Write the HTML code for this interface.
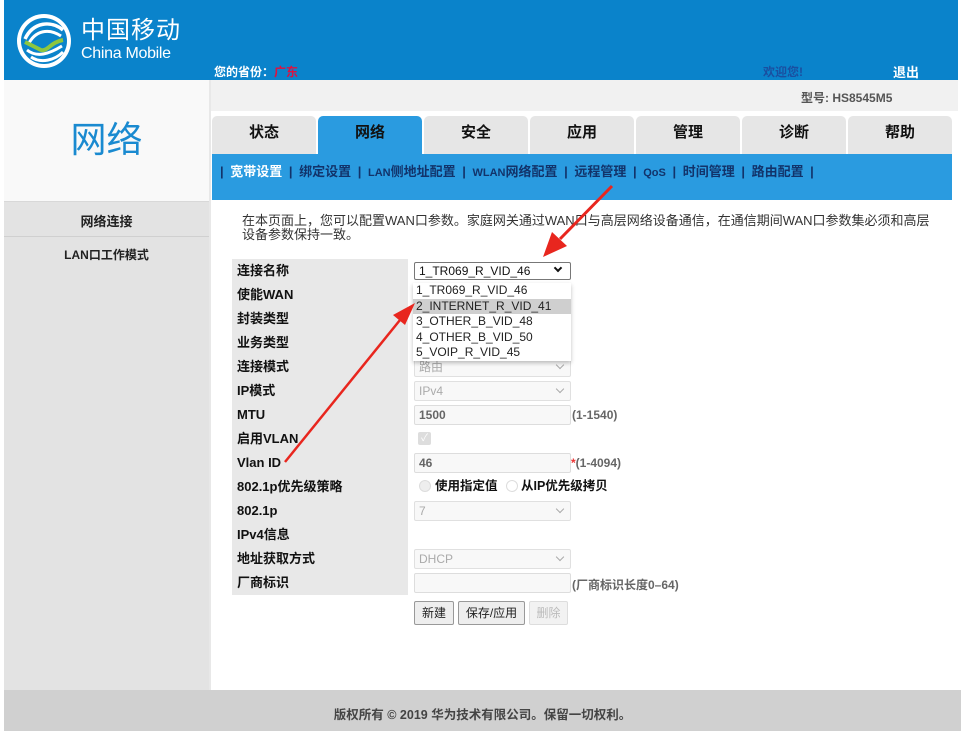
<!DOCTYPE html>
<html><head><meta charset="utf-8"><style>
*{margin:0;padding:0;box-sizing:border-box}
body{width:967px;height:744px;background:#fff;position:relative;overflow:hidden;font-family:"Liberation Sans","Noto Sans CJK SC",sans-serif;font-size:13px;color:#222}
.a{position:absolute}
.b{font-weight:bold}
.tab{position:absolute;top:116px;height:38px;width:104px;background:#e6e6e6;border-radius:5px 5px 0 0;text-align:center;line-height:34px;font-size:15px;font-weight:bold;color:#111}
.lbl{position:absolute;left:237px;font-weight:bold;font-size:13px;color:#111;line-height:16px}
.sel{position:absolute;left:414px;width:157px;height:20px;border:1px solid #e0e0e0;background:#f8f8f8;border-radius:2px;color:#aaa;font-size:12px;line-height:18px;padding-left:4px}
.sel:after{content:"";position:absolute;right:7px;top:4px;width:5px;height:5px;border-right:1.5px solid #aaa;border-bottom:1.5px solid #aaa;transform:rotate(45deg)}
.sel.n:after{display:none}
.inp{position:absolute;left:414px;width:157px;height:20px;border:1px solid #ddd;background:#f8f8f8;border-radius:2px;color:#666;font-size:12px;line-height:18px;padding-left:4px}
.hint{position:absolute;font-size:12px;color:#666;font-weight:bold}
.opt{height:15.5px;line-height:15.5px;padding-left:3px;font-size:12px;color:#222}
.btn{position:absolute;top:601px;height:24px;border:1px solid #999;background:#eee;border-radius:2px;font-size:12px;text-align:center;line-height:22px}
</style></head><body>
<div class="a" style="left:4px;top:0;width:954px;height:80px;background:#0a83cb"></div>
<svg class="a" style="left:15px;top:12px" width="58" height="58" viewBox="0 0 58 58">
<circle cx="29" cy="29" r="27" fill="#fff"/>
<circle cx="29" cy="29" r="23" fill="#0a83cb"/>
<path d="M10 27 C18 10 36 8 48 18" stroke="#fff" stroke-width="3.5" fill="none"/>
<path d="M13 33 C20 18 34 16 46 24" stroke="#fff" stroke-width="3" fill="none"/>
<path d="M10 30 L26 38 C32 40 36 30 48 28" stroke="#8dc63f" stroke-width="4" fill="none"/>
<path d="M12 38 C22 46 34 42 47 34" stroke="#fff" stroke-width="3" fill="none"/>
<path d="M16 45 C26 52 40 48 48 40" stroke="#fff" stroke-width="3" fill="none"/>
</svg>
<div class="a" style="left:81px;top:17px;color:#fff;font-size:24px;letter-spacing:1px;line-height:28px">中国移动</div>
<div class="a" style="left:81px;top:45px;color:#fff;font-size:16px;line-height:18px;letter-spacing:-0.3px">China Mobile</div>
<div class="a b" style="left:214px;top:65px;color:#fff;font-size:12px;line-height:14px">您的省份：<span style="color:#e0103f">广东</span></div>
<div class="a b" style="left:763px;top:65px;color:#1a4fa0;font-size:12px;line-height:14px">欢迎您!</div>
<div class="a b" style="left:893px;top:65px;color:#fff;font-size:13px;line-height:15px">退出</div>
<div class="a" style="left:4px;top:80px;width:205px;height:122px;background:#f9f9f9"></div>
<div class="a" style="left:4px;top:202px;width:205px;height:488px;background:#e3e3e3"></div>
<div class="a" style="left:4px;top:236px;width:205px;height:1px;background:#d0d0d0"></div>
<div class="a" style="left:4px;top:201px;width:205px;height:1px;background:#d8d8d8"></div>
<div class="a" style="left:4px;top:118px;width:205px;text-align:center;font-size:36px;color:#1a8ad0;line-height:44px">网络</div>
<div class="a b" style="left:4px;top:211px;width:205px;text-align:center;font-size:13px;color:#222">网络连接</div>
<div class="a b" style="left:4px;top:246px;width:205px;text-align:center;font-size:12px;color:#222">LAN口工作模式</div>
<div class="a" style="left:209px;top:80px;width:2px;height:610px;background:#e8e8e8"></div>
<div class="a" style="left:211px;top:80px;width:747px;height:31px;background:#f1f1f1"></div>
<div class="a b" style="left:801px;top:89px;font-size:12px;color:#555">型号: HS8545M5</div>
<div class="tab" style="left:212px">状态</div>
<div class="tab" style="left:318px;background:#2a9be0">网络</div>
<div class="tab" style="left:424px">安全</div>
<div class="tab" style="left:530px">应用</div>
<div class="tab" style="left:636px">管理</div>
<div class="tab" style="left:742px">诊断</div>
<div class="tab" style="left:848px">帮助</div>
<div class="a" style="left:212px;top:154px;width:740px;height:46px;background:#2a9be0"></div>
<div class="a b" style="left:220px;top:161px;font-size:13px;color:#12336a;white-space:nowrap;word-spacing:3px">| <span style="color:#fff">宽带设置</span> | 绑定设置 | <span style="font-size:11px">LAN</span>侧地址配置 | <span style="font-size:11px">WLAN</span>网络配置 | 远程管理 | <span style="font-size:11px">QoS</span> | 时间管理 | 路由配置 |</div>
<div class="a" style="left:242px;top:214px;width:700px;font-size:13px;line-height:14px;color:#333">在本页面上，您可以配置WAN口参数。家庭网关通过WAN口与高层网络设备通信，在通信期间WAN口参数集必须和高层设备参数保持一致。</div>
<div class="a" style="left:232px;top:259px;width:176px;height:336px;background:#e8e8e8"></div>
<div class="lbl" style="top:263px">连接名称</div>
<div class="lbl" style="top:287px">使能WAN</div>
<div class="lbl" style="top:311px">封装类型</div>
<div class="lbl" style="top:335px">业务类型</div>
<div class="lbl" style="top:359px">连接模式</div>
<div class="lbl" style="top:383px">IP模式</div>
<div class="lbl" style="top:407px">MTU</div>
<div class="lbl" style="top:431px">启用VLAN</div>
<div class="lbl" style="top:455px">Vlan ID</div>
<div class="lbl" style="top:479px">802.1p优先级策略</div>
<div class="lbl" style="top:503px">802.1p</div>
<div class="lbl" style="top:527px">IPv4信息</div>
<div class="lbl" style="top:551px">地址获取方式</div>
<div class="lbl" style="top:575px">厂商标识</div>
<div class="sel n" style="top:262px;height:18px;border:1px solid #777;background:#fff;color:#111;line-height:16px">1_TR069_R_VID_46</div>
<div class="a" style="left:555px;top:265px;width:6px;height:6px;border-right:2px solid #111;border-bottom:2px solid #111;transform:rotate(45deg)"></div>
<div class="sel" style="top:357px">路由</div>
<div class="sel" style="top:381px">IPv4</div>
<div class="inp" style="top:405px;font-weight:bold">1500</div>
<div class="hint" style="left:572px;top:408px">(1-1540)</div>
<div class="a" style="left:418px;top:432px;width:13px;height:13px;background:#ddd;border-radius:2px;color:#fff;font-size:10px;text-align:center;line-height:13px">✓</div>
<div class="inp" style="top:453px;font-weight:bold">46</div>
<div class="hint" style="left:571px;top:456px"><span style="color:#e33">*</span>(1-4094)</div>
<div class="a" style="left:419px;top:480px;width:12px;height:12px;border-radius:50%;border:1px solid #ddd;background:#eee"></div>
<div class="a b" style="left:435px;top:479px;font-size:12.5px;line-height:15px;color:#111">使用指定值</div>
<div class="a" style="left:506px;top:480px;width:12px;height:12px;border-radius:50%;border:1px solid #ddd;background:#fff"></div>
<div class="a b" style="left:521px;top:479px;font-size:12.5px;line-height:15px;color:#111">从IP优先级拷贝</div>
<div class="sel" style="top:501px">7</div>
<div class="sel" style="top:549px">DHCP</div>
<div class="inp" style="top:573px"></div>
<div class="hint" style="left:572px;top:576px">(厂商标识长度0–64)</div>
<div class="btn" style="left:414px;width:40px">新建</div>
<div class="btn" style="left:458px;width:67px">保存/应用</div>
<div class="btn" style="left:529px;width:39px;border-color:#ddd;color:#bbb;background:#f2f2f2">删除</div>
<div class="a" style="left:413px;top:283px;width:158px;height:78px;background:#fff;box-shadow:0 2px 4px rgba(0,0,0,.25)">
<div class="opt">1_TR069_R_VID_46</div>
<div class="opt" style="background:#cfcfcf">2_INTERNET_R_VID_41</div>
<div class="opt">3_OTHER_B_VID_48</div>
<div class="opt">4_OTHER_B_VID_50</div>
<div class="opt">5_VOIP_R_VID_45</div>
</div>
<svg class="a" style="left:0;top:0" width="967" height="744">
<path d="M612 186 L560 239" stroke="#e8261e" stroke-width="3" fill="none"/>
<polygon points="543,257 552,232 567,246" fill="#e8261e"/>
<path d="M285 462 L400 320" stroke="#e8261e" stroke-width="2.5" fill="none"/>
<polygon points="415,303 393,315 405,325" fill="#e8261e"/>
</svg>
<div class="a" style="left:4px;top:690px;width:957px;height:41px;background:#d0d0d0"></div>
<div class="a b" style="left:4px;top:704px;width:957px;text-align:center;font-size:12.5px;color:#444">版权所有 © 2019 华为技术有限公司。保留一切权利。</div>
</body></html>
